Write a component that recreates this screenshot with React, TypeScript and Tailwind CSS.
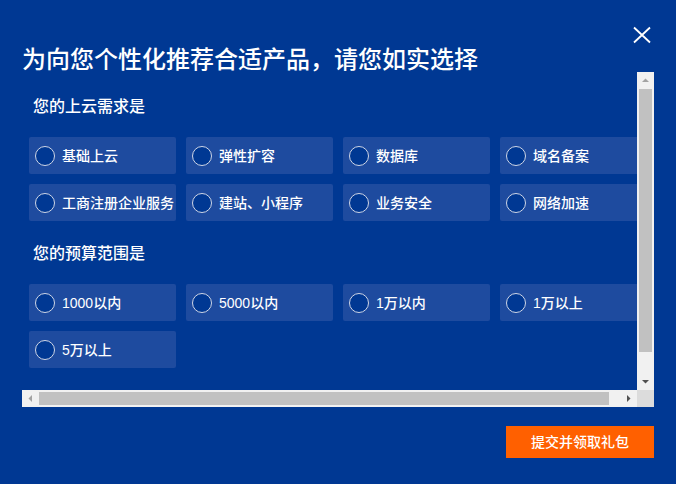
import { useState } from 'react';

const needs = [
  '基础上云',
  '弹性扩容',
  '数据库',
  '域名备案',
  '工商注册企业服务',
  '建站、小程序',
  '业务安全',
  '网络加速',
];

const budgets = ['1000以内', '5000以内', '1万以内', '1万以上', '5万以上'];

const Option = ({ label, checked, onClick }: { label: string; checked: boolean; onClick: () => void }) => (
  <button
    type="button"
    onClick={onClick}
    className="flex h-[37px] items-center gap-[7px] rounded-[2px] bg-[#1e4b9f] pl-[6px] text-left text-[14px] font-medium text-white"
  >
    <span className="flex h-5 w-5 shrink-0 items-center justify-center rounded-full border border-[#cfd6e6] bg-[#003893]">
      {checked && <span className="h-2.5 w-2.5 rounded-full bg-white" />}
    </span>
    <span className="whitespace-nowrap leading-[20px]">{label}</span>
  </button>
);

// little triangles for the scrollbar buttons
const Arrow = ({ dir, color }: { dir: 'up' | 'down' | 'left' | 'right'; color: string }) => {
  const d = {
    up: 'M5 10h7L8.5 6.5z',
    down: 'M5 7h7l-3.5 3.5z',
    left: 'M10 5v7L6.5 8.5z',
    right: 'M7 5v7l3.5-3.5z',
  }[dir];
  return (
    <div className="h-[17px] w-[17px] shrink-0 bg-[#f1f1f1]">
      <svg width="17" height="17" viewBox="0 0 17 17">
        <path d={d} fill={color} />
      </svg>
    </div>
  );
};

const App = () => {
  const [need, setNeed] = useState<string | null>(null);
  const [budget, setBudget] = useState<string | null>(null);

  return (
    <div
      className="relative h-[484px] w-[676px] bg-[#003893] px-[22px] pt-[48px]"
      style={{ fontFamily: '"Liberation Sans", "Noto Sans CJK SC", sans-serif' }}
    >
      {/* close */}
      <button type="button" className="absolute right-[25px] top-[26px] h-[18px] w-[18px]">
        <svg viewBox="0 0 18 18" className="h-[18px] w-[18px]" fill="none" stroke="white" strokeWidth="1.8">
          <path d="M1 1.5L17 16.5M17 1.5L1 16.5" />
        </svg>
      </button>

      <h1 className="text-[24px] font-medium leading-[24px] text-white">为向您个性化推荐合适产品，请您如实选择</h1>

      {/* panel with classic scrollbars */}
      <div className="grid h-[335px] w-[632px] grid-cols-[615px_17px] grid-rows-[318px_17px]">
        <div className="overflow-hidden">
          <div className="w-[627px] pb-[46px] pl-[7px] pt-[23px]">
            <div className="ml-[4px] text-[16px] font-medium leading-[24px] text-white">您的上云需求是</div>
            <div className="mt-[18px] grid grid-cols-[repeat(4,147px)] gap-[10px]">
              {needs.map((n) => (
                <Option key={n} label={n} checked={need === n} onClick={() => setNeed(n)} />
              ))}
            </div>

            <div className="ml-[4px] mt-[21px] text-[16px] font-medium leading-[24px] text-white">您的预算范围是</div>
            <div className="mt-[18px] grid grid-cols-[repeat(4,147px)] gap-[10px]">
              {budgets.map((b) => (
                <Option key={b} label={b} checked={budget === b} onClick={() => setBudget(b)} />
              ))}
            </div>
          </div>
        </div>

        {/* vertical bar */}
        <div className="flex flex-col bg-[#f1f1f1]">
          <Arrow dir="up" color="#a3a3a3" />
          <div className="flex-1 px-[2px]">
            <div className="h-[263px] bg-[#c1c1c1]" />
          </div>
          <Arrow dir="down" color="#505050" />
        </div>

        {/* horizontal bar */}
        <div className="flex bg-[#f1f1f1]">
          <Arrow dir="left" color="#a3a3a3" />
          <div className="flex-1 py-[2px]">
            <div className="h-full w-[570px] bg-[#c1c1c1]" />
          </div>
          <Arrow dir="right" color="#505050" />
        </div>

        <div className="bg-[#dcdcdc]" />
      </div>

      <div className="mt-[19px] flex justify-end">
        <button
          type="button"
          className="h-[32px] w-[148px] bg-[#ff6000] text-[14px] font-medium text-white"
        >
          提交并领取礼包
        </button>
      </div>
    </div>
  );
};

export default App;
